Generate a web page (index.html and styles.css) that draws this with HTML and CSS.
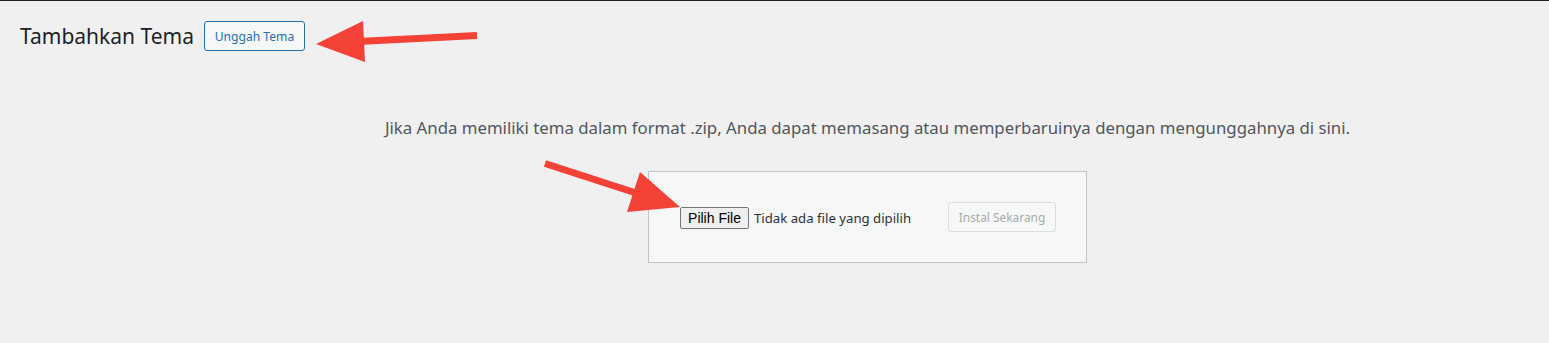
FILE: index.html
```html
<!DOCTYPE html>
<html lang="id">
<head>
<meta charset="utf-8">
<title>Tambahkan Tema</title>
<link rel="stylesheet" href="styles.css">
</head>
<body>
<div class="wrap">
  <div class="page-header">
    <h1 class="page-title">Tambahkan Tema</h1>
    <button class="title-action" type="button">Unggah Tema</button>
  </div>
  <div class="upload-theme">
    <p class="install-help">Jika Anda memiliki tema dalam format .zip, Anda dapat memasang atau memperbaruinya dengan mengunggahnya di sini.</p>
    <form class="upload-form">
      <div class="file-field">
        <span class="file-button">Pilih File</span>
        <span class="file-name">Tidak ada file yang dipilih</span>
      </div>
      <button class="install-button" type="button" disabled>Instal Sekarang</button>
    </form>
  </div>
</div>
<svg class="annotations" width="1549" height="343" viewBox="0 0 1549 343" aria-hidden="true">
  <line x1="477" y1="35.5" x2="358" y2="41.5" stroke="#f44236" stroke-width="7"/>
  <polygon points="316,44 363,21 365,62" fill="#f44236"/>
  <line x1="545" y1="163.5" x2="636" y2="193" stroke="#f44236" stroke-width="7"/>
  <polygon points="680,207 640,172 627,212" fill="#f44236"/>
</svg>
</body>
</html>
```
FILE: styles.css
```css
html, body {
  margin: 0;
  padding: 0;
}
body {
  background: #f0f0f1;
  border-top: 1px solid #1d2327;
  font-family: "Noto Sans", sans-serif;
  color: #3c434a;
  min-height: 342px;
  position: relative;
  overflow: hidden;
}
.wrap {
  padding-left: 20px;
}
.page-header {
  display: flex;
  align-items: center;
  gap: 10px;
  height: 30px;
  margin-top: 20px;
}
.page-title {
  margin: 0;
  font-size: 21px;
  font-weight: 400;
  line-height: 30px;
  color: #1d2327;
}
.title-action {
  box-sizing: border-box;
  height: 30px;
  width: 101px;
  padding: 0;
  border: 1px solid #2271b1;
  border-radius: 3px;
  background: #f6f7f7;
  color: #2271b1;
  font-family: inherit;
  font-size: 12.1px;
  white-space: nowrap;
}
.upload-theme {
  margin-left: 166px;
  display: flex;
  flex-direction: column;
  align-items: center;
}
.install-help {
  margin: 65px 0 31px;
  font-size: 16.8px;
  line-height: 24px;
  color: #50575e;
  white-space: nowrap;
}
.upload-form {
  box-sizing: border-box;
  width: 439px;
  height: 92px;
  margin: 0;
  padding: 0 30px;
  border: 1px solid #c3c4c7;
  background: #f6f7f7;
  display: flex;
  align-items: center;
  justify-content: space-between;
}
.file-field {
  display: flex;
  align-items: center;
  gap: 5px;
  margin-top: 2px;
}
.file-button {
  box-sizing: border-box;
  height: 22px;
  width: 69px;
  margin-left: 1px;
  display: flex;
  align-items: center;
  justify-content: center;
  border: 1px solid #767676;
  border-radius: 2px;
  background: #efefef;
  color: #000;
  font-family: "Liberation Sans", Arial, sans-serif;
  font-size: 14px;
}
.file-name {
  font-size: 13.2px;
  color: #2c3338;
  white-space: nowrap;
}
.install-button {
  box-sizing: border-box;
  width: 108px;
  height: 30px;
  padding: 0;
  border: 1px solid #dcdcde;
  border-radius: 3px;
  background: #f6f7f7;
  color: #a7aaad;
  font-family: inherit;
  font-size: 11.9px;
  white-space: nowrap;
}
.annotations {
  position: absolute;
  top: -1px;
  left: 0;
  pointer-events: none;
}
```
